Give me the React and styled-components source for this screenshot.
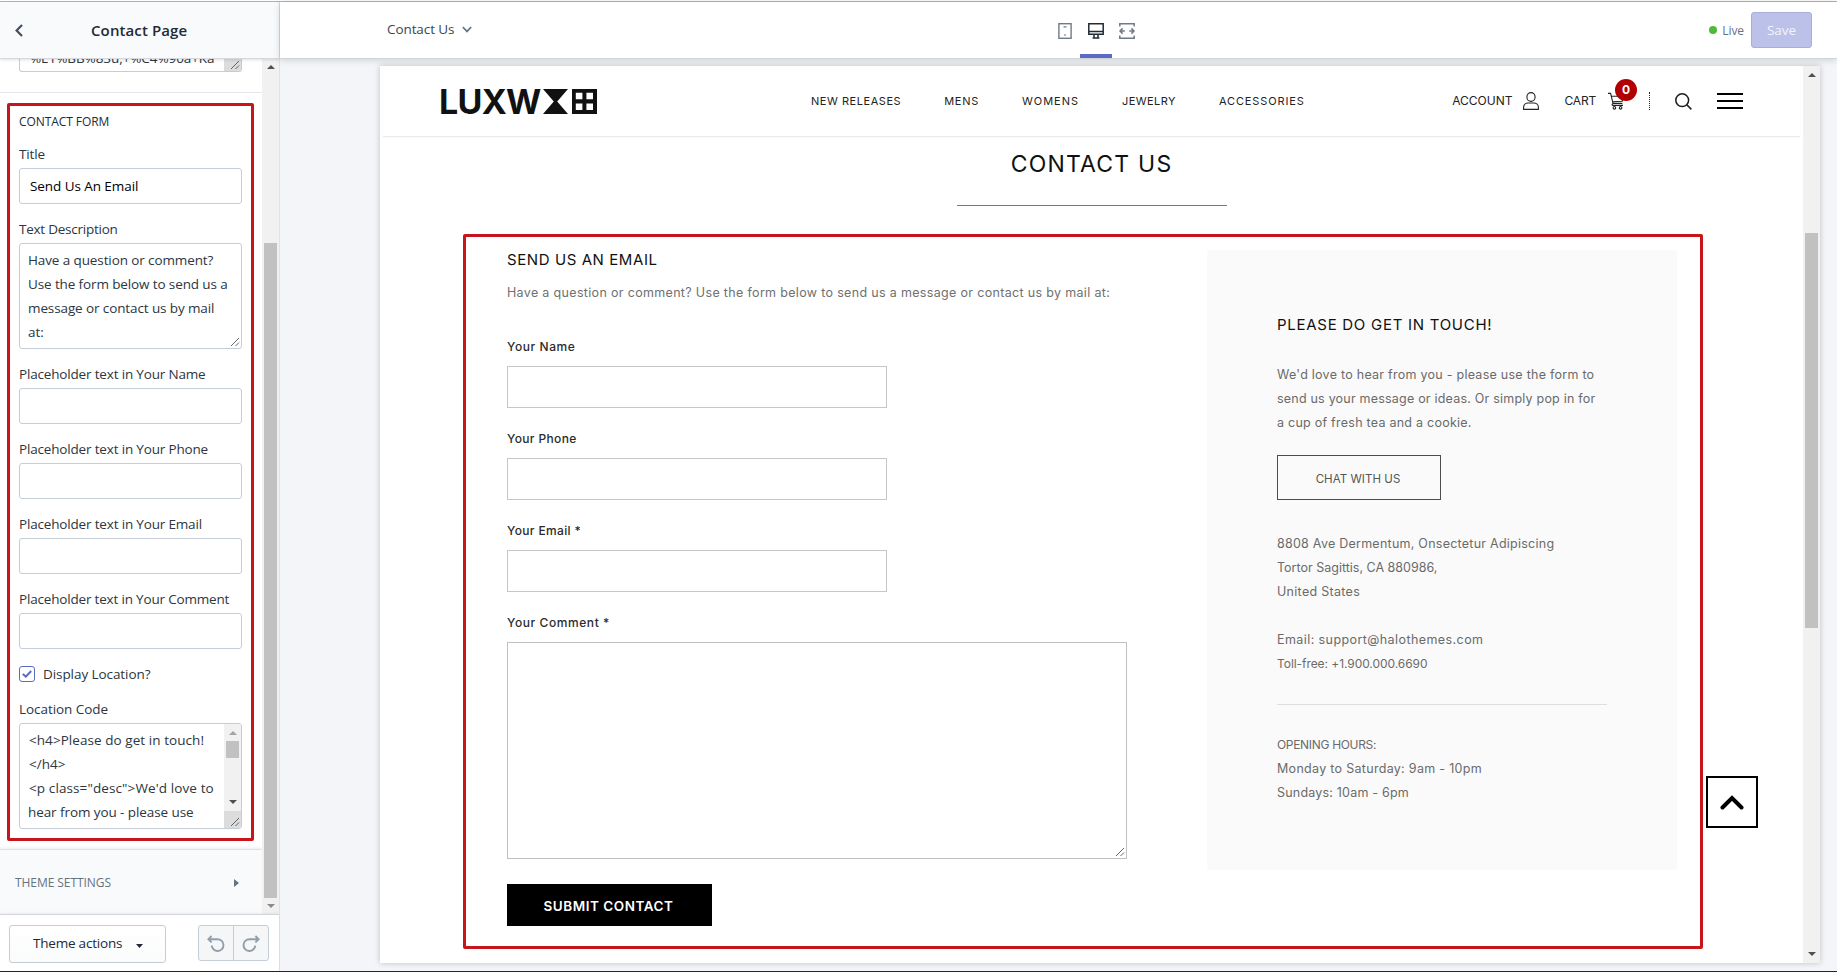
import React from 'react';
import styled, { createGlobalStyle } from 'styled-components';

const UI = '"Open Sans", "Noto Sans", sans-serif';
const STORE = 'Inter, "Open Sans", sans-serif';

const Global = createGlobalStyle`
  * { box-sizing: border-box; }
  body { margin: 0; overflow: hidden; background: #fff; }
  svg { display: block; flex: none; }
`;

/* ---------- shared ---------- */
const Page = styled.div`
  width: 1837px; height: 972px; display: flex; flex-direction: column;
  padding-top: 1px; border-bottom: 1px solid #22252a; overflow: hidden;
`;
const Columns = styled.div`flex: 1; display: flex; min-height: 0; border-top: 1px solid #b3b3b3;`;
const Line = styled.div`
  white-space: pre; line-height: 24px; height: 24px;
  letter-spacing: ${(p) => p.$ls || 0}px;
`;
const Track = styled.div`
  flex: none; width: ${(p) => p.$w}px; background: #f1f1f1;
  display: flex; flex-direction: column; align-items: center;
`;
const TrackGap = styled.div`height: ${(p) => p.$h}px; flex: none; display: flex; align-items: ${(p) => p.$align || 'flex-start'};`;
const Thumb = styled.div`width: 13px; height: ${(p) => p.$h}px; background: #c1c1c1; flex: none;`;
const Spring = styled.div`flex: 1;`;
const Callout = styled.section`border: 3px solid #c8151b; border-radius: 2px;`;

const Arrow = ({ down, color = '#505050' }) => (
  <svg width="8" height="4" viewBox="0 0 8 4"><path d={down ? 'M0 0h8L4 4z' : 'M0 4h8L4 0z'} fill={color} /></svg>
);
const Grip = () => (
  <svg width="10" height="10" viewBox="0 0 10 10" stroke="#555" strokeWidth="0.9" fill="none"><path d="M1 9L9 1M5.5 9L9 5.5" /></svg>
);

/* ---------- sidebar ---------- */
const Sidebar = styled.aside`
  width: 280px; flex: none; border-right: 1px solid #dfe3e8; display: flex; flex-direction: column;
  font: 13.5px ${UI}; color: #2c3640; background: #fff;
`;
const SideHeader = styled.header`
  height: 57px; flex: none; background: #f9fafc; border-bottom: 1px solid #d5d9de;
  box-shadow: 0 1px 3px rgba(0,0,0,.12); display: flex; align-items: center; padding-left: 15px;
  position: relative; z-index: 1;
`;
const SideTitle = styled(Line)`font-size: 15px; font-weight: 600; color: #212b36; margin: -1px 0 0 68px;`;
const SideBody = styled.div`flex: 1; min-height: 0; display: flex;`;
const Scroll = styled.div`width: 262px; overflow: hidden; display: flex; flex-direction: column;`;
const Previous = styled.div`
  margin: 0 0 0 19px; width: 223px; height: 13px; flex: none; overflow: hidden; display: flex;
  justify-content: space-between; border: 1px solid #c4cdd5; border-top: 0; border-radius: 0 0 3px 3px;
  padding-left: 10px;
`;
const ClippedLine = styled(Line)`margin-top: -13px;`;
const GripBox = styled.div`width: 17px; height: ${(p) => p.$h}px; background: #dcdcdc; display: flex; align-items: flex-end; justify-content: flex-end; padding: 1px;`;
const Divider = styled.div`height: 1px; flex: none; margin-top: 20px; background: #e3e6ea;`;
const FormCallout = styled(Callout)`
  margin: 10px 8px 8px 7px; height: 738px; flex: none; padding: 0 9px; display: flex; flex-direction: column;
`;
const GroupTitle = styled(Line)`font-size: 12px; font-weight: 500; height: 31px; line-height: 31px; margin-bottom: 5px; color: #212b36;`;
const Field = styled.div`margin-bottom: 13px;`;
const Control = styled.div`
  margin-top: 2px; height: ${(p) => p.$h || 36}px; border: 1px solid #c4cdd5; border-radius: 3px; background: #fff;
  display: flex; justify-content: space-between; align-items: ${(p) => p.$align || 'center'};
  padding-left: ${(p) => p.$pl || 10}px; overflow: hidden; color: ${(p) => p.$color || 'inherit'};
`;
const Lines = styled.div`padding-top: 4px;`;
const CodeLine = styled(Line)`padding-left: 1px;`;
const Corner = styled.div`align-self: flex-end; padding: 1px;`;
const CheckRow = styled.div`display: flex; align-items: center; height: 24px; gap: 8px; margin-bottom: 11px;`;
const Check = styled.div`
  width: 16px; height: 16px; border: 1px solid #5c6ac4; border-radius: 3px; display: flex; align-items: center; justify-content: center;
`;
const ThemeSettings = styled.div`
  flex: 1; background: #f9fafb; border-top: 1px solid #dfe3e8; box-shadow: 0 -1px 3px rgba(0,0,0,.08);
  display: flex; align-items: center; justify-content: space-between; padding: 1px 23px 0 15px;
  font-size: 12px; font-weight: 500; color: #637381;
`;
const SideFooter = styled.footer`
  height: 57px; flex: none; border-top: 1px solid #d2d6da; box-shadow: 0 -1px 3px rgba(0,0,0,.06);
  display: flex; justify-content: space-between; padding: 10px 10px 0 9px;
`;
const ThemeActions = styled.div`
  width: 157px; height: 38px; border: 1px solid #c4cdd5; border-radius: 3px; background: linear-gradient(#fff, #fafbfc);
  display: flex; align-items: center; padding: 0 22px 2px 23px; justify-content: space-between; color: #212b36;
`;
const History = styled.div`width: 71px; height: 36px; border: 1px solid #c4cdd5; border-radius: 3px; background: #f4f6f8; display: flex;`;
const HistoryButton = styled.div`
  flex: 1; display: flex; align-items: center; justify-content: center; padding-top: 2px;
  & + & { border-left: 1px solid #c4cdd5; }
`;

/* ---------- editor ---------- */
const Editor = styled.main`flex: 1; min-width: 0; display: flex; flex-direction: column; background: #f4f5f8;`;
const TopBar = styled.header`
  height: 57px; flex: none; background: #fff; border-bottom: 1px solid #d0d3d7; box-shadow: 0 1px 7px rgba(0,0,0,.16);
  display: flex; align-items: center; padding: 0 25px 0 107px; font: 13.5px ${UI}; color: #3c4650; position: relative; z-index: 1;
`;
const PagePicker = styled.div`display: flex; align-items: center; gap: 8px; width: 671px; padding-bottom: 2px;`;
const Devices = styled.div`display: flex; height: 56px; align-self: flex-start; gap: 7.5px;`;
const Device = styled.div`
  width: ${(p) => p.$w}px; display: flex; justify-content: center; padding-top: 21px;
  border-bottom: 4px solid ${(p) => (p.$active ? '#5c6ac4' : 'transparent')};
`;
const Status = styled.div`margin-left: auto; display: flex; align-items: center; gap: 5px; font-size: 12px; color: #637381; padding-top: 1px;`;
const Dot = styled.i`width: 8px; height: 8px; border-radius: 50%; background: #50b83c; margin-top: -2px;`;
const Save = styled.div`
  margin-left: 7px; width: 61px; height: 36px; border: 1px solid #a7aedc; border-radius: 3px; background: #bbc1e8;
  color: #f3f4fb; display: flex; align-items: center; justify-content: center;
`;
const Canvas = styled.div`flex: 1; min-height: 0; padding: 7px 17px 8px 100px; display: flex;`;
const Frame = styled.div`
  flex: 1; display: flex; background: #fff; position: relative; box-shadow: 0 0 6px rgba(0,0,0,.22);
`;
const Store = styled.div`flex: 1; min-width: 0; font: 12px ${STORE}; color: #666;`;

const StoreHeader = styled.header`
  height: 71px; margin: 0 3px; padding: 0 57px 0 57px; border-bottom: 1px solid #ebebeb; box-shadow: 0 1px 2px rgba(0,0,0,.04);
  display: flex; align-items: center; color: #232323;
`;
const Logo = styled.div`display: flex; align-items: center; height: 25px; width: 157px; color: #111;`;
const LogoText = styled.span`
  font: 700 34px/25px ${STORE}; letter-spacing: -0.74px; width: 103.5px; margin-left: -1px; margin-right: 1px; white-space: nowrap;
`;
const Nav = styled.nav`display: flex; gap: 43px; margin-left: 214px; font-size: 11px; padding-bottom: 1px;`;
const Tools = styled.div`margin-left: auto; display: flex; align-items: center; font-size: 12px;`;
const Tool = styled.div`display: flex; align-items: center; gap: ${(p) => p.$gap || 0}px; margin-left: ${(p) => p.$ml || 0}px; position: relative;`;
const Badge = styled.b`
  position: absolute; right: -13px; top: -10px; width: 22px; height: 22px; border-radius: 50%; background: #b10000; color: #fff;
  font-size: 12px; line-height: 22px; text-align: center;
`;
const Dots = styled.i`width: 0; height: 18px; border-left: 1px dotted #232323; margin-left: 25px;`;
const Burger = styled.div`
  width: 26px; height: 16px; margin-left: 25px; display: flex; flex-direction: column; justify-content: space-between;
  &::before, &::after { content: ''; } & > i, &::before, &::after { height: 2px; background: #000; }
`;
const TitleBlock = styled.div`height: 97px; display: flex; flex-direction: column; align-items: center; padding-top: 10px;`;
const PageTitle = styled.h1`margin: 0; font-size: 23px; font-weight: 400; line-height: 34px; letter-spacing: 1.2px; color: #111;`;
const Rule = styled.div`width: 270px; height: 1px; background: #777; margin-top: 24px;`;
const ContactCallout = styled(Callout)`width: 1240px; height: 715px; margin-left: 83px; padding: 0 23px 0 41px; display: flex; justify-content: space-between;`;
const Form = styled.div`width: 620px; padding-top: 11px;`;
const Heading = styled(Line)`font-size: 15px; color: #111;`;
const Intro = styled(Line)`margin: 9px 0 30px; font-size: 12.5px; color: #707070;`;
const Label = styled(Line)`color: #2b2b2b; margin-bottom: 7px; font-weight: 500;`;
const Input = styled.div`width: 380px; height: 42px; border: 1px solid #c6c6c6; margin-bottom: 19px;`;
const TextArea = styled.div`
  width: 620px; height: 217px; border: 1px solid #c0c0c0; display: flex; align-items: flex-end; justify-content: flex-end; padding: 1px;
`;
const Submit = styled.div`
  width: 205px; height: 42px; margin-top: 25px; background: #000; color: #fff; font-size: 13.5px; font-weight: 600;
  display: flex; align-items: center; justify-content: center; padding: 1px 2px 0 0;
`;
const Panel = styled.div`width: 470px; height: 620px; margin-top: 13px; padding: 62px 70px 0; background: #fafafa;`;
const PanelHeading = styled(Heading)`line-height: 26px;`;
const Block = styled.div`margin-top: ${(p) => p.$mt}px; color: #6a6a6a; font-size: 12.5px;`;
const SmallLine = styled(Line)`font-size: 12px;`;
const Chat = styled.div`
  width: 164px; height: 45px; margin-top: 20px; border: 1px solid #4c4c4c; color: #555; font-size: 11.5px;
  display: flex; align-items: center; justify-content: center; padding: 2px 2px 0 0;
`;
const Separator = styled.div`height: 1px; margin-top: 28px; background: #dedede;`;
const ToTop = styled.div`
  position: absolute; left: 1326px; top: 710px; width: 52px; height: 52px; border: 2px solid #000; background: #fff;
  display: flex; align-items: center; justify-content: center;
`;

const PLACEHOLDERS = [['Name', -0.17], ['Phone', -0.17], ['Email', -0.17], ['Comment', -0.18]];
const NAV = [['NEW RELEASES', 0.54], ['MENS', 0.72], ['WOMENS', 0.98], ['JEWELRY', 0.44], ['ACCESSORIES', 0.89]];
const INPUTS = [['Your Name', 0.58], ['Your Phone', 0.36], ['Your Email *', 0.36]];

function SidebarPanel() {
  return (
    <Sidebar>
      <SideHeader>
        <svg width="8" height="13" viewBox="0 0 8 13" fill="none" stroke="#454f5b" strokeWidth="2.2"><path d="M7 1L1.6 6.5L7 12" /></svg>
        <SideTitle $ls={0.11}>Contact Page</SideTitle>
      </SideHeader>
      <SideBody>
        <Scroll>
          <Previous>
            <ClippedLine $ls={-0.07}>%E1%BB%83u,+%C4%90a+Ka</ClippedLine>
            <GripBox $h={12}><Grip /></GripBox>
          </Previous>
          <Divider />
          <FormCallout>
            <GroupTitle $ls={-0.08}>CONTACT FORM</GroupTitle>
            <Field>
              <Line $ls={-0.14}>Title</Line>
              <Control $color="#000"><Line $ls={-0.07}>Send Us An Email</Line></Control>
            </Field>
            <Field>
              <Line $ls={-0.24}>Text Description</Line>
              <Control $h={106} $pl={8} $align="flex-start">
                <Lines>
                  <Line $ls={-0.11}>Have a question or comment?</Line>
                  <Line $ls={-0.12}>Use the form below to send us a</Line>
                  <Line $ls={-0.11}>message or contact us by mail</Line>
                  <Line>at:</Line>
                </Lines>
                <Corner><Grip /></Corner>
              </Control>
            </Field>
            {PLACEHOLDERS.map(([name, ls]) => (
              <Field key={name}>
                <Line $ls={ls}>Placeholder text in Your {name}</Line>
                <Control />
              </Field>
            ))}
            <CheckRow>
              <Check>
                <svg width="10" height="8" viewBox="0 0 10 8" fill="none" stroke="#5c6ac4" strokeWidth="2"><path d="M.8 4L3.8 6.6L9.2 1" /></svg>
              </Check>
              <Line $ls={-0.07}>Display Location?</Line>
            </CheckRow>
            <Field>
              <Line $ls={-0.06}>Location Code</Line>
              <Control $h={106} $pl={8} $align="flex-start">
                <Lines>
                  <CodeLine $ls={0.06}>{'<h4>Please do get in touch!'}</CodeLine>
                  <CodeLine $ls={0.04}>{'</h4>'}</CodeLine>
                  <CodeLine $ls={0.11}>{'<p class="desc">We\'d love to'}</CodeLine>
                  <Line $ls={-0.08}>hear from you - please use</Line>
                </Lines>
                <Track $w={17}>
                  <TrackGap $h={17} $align="center"><Arrow color="#a3a3a3" /></TrackGap>
                  <Thumb $h={17} />
                  <TrackGap $h={53} $align="flex-end"><TrackGap $h={11}><Arrow down /></TrackGap></TrackGap>
                  <GripBox $h={17}><Grip /></GripBox>
                </Track>
              </Control>
            </Field>
          </FormCallout>
          <ThemeSettings>
            <Line $ls={-0.06}>THEME SETTINGS</Line>
            <svg width="5" height="8" viewBox="0 0 5 8" fill="#637381"><path d="M0 0L5 4L0 8z" /></svg>
          </ThemeSettings>
        </Scroll>
        <Track $w={17}>
          <TrackGap $h={184}><TrackGap $h={10} $align="flex-end"><Arrow /></TrackGap></TrackGap>
          <Thumb $h={655} />
          <TrackGap $h={16} $align="center"><Arrow down color="#8a8a8a" /></TrackGap>
        </Track>
      </SideBody>
      <SideFooter>
        <ThemeActions>
          <Line $ls={-0.21}>Theme actions</Line>
          <svg width="7" height="10" viewBox="0 0 7 10" fill="#212b36"><path d="M0 6h7L3.5 10z" /></svg>
        </ThemeActions>
        <History>
          <HistoryButton>
            <svg width="18" height="18" viewBox="0 0 18 18" fill="none" stroke="#919eab" strokeWidth="1.9">
              <path d="M1.8 4.2H10.6a5.9 5.9 0 1 1-5.9 6.4M4.6 1L1.4 4.2L4.6 7.4" />
            </svg>
          </HistoryButton>
          <HistoryButton>
            <svg width="18" height="18" viewBox="0 0 18 18" fill="none" stroke="#919eab" strokeWidth="1.9">
              <path d="M16.2 4.2H7.4a5.9 5.9 0 1 0 5.9 6.4M13.4 1L16.6 4.2L13.4 7.4" />
            </svg>
          </HistoryButton>
        </History>
      </SideFooter>
    </Sidebar>
  );
}

function EditorBar() {
  return (
    <TopBar>
      <PagePicker>
        <Line $ls={-0.09}>Contact Us</Line>
        <svg width="10" height="7" viewBox="0 0 10 7" fill="none" stroke="#637381" strokeWidth="1.7"><path d="M.8 1L5 5.4L9.2 1" /></svg>
      </PagePicker>
      <Devices>
        <Device $w={14}>
          <svg width="14" height="16" viewBox="0 0 14 16" fill="none" stroke="#6f7b86" strokeWidth="1.4">
            <rect x=".9" y=".7" width="12.2" height="14.6" /><path d="M5.5 3.9h3M6.3 12h1.4" />
          </svg>
        </Device>
        <Device $w={32} $active>
          <svg width="16" height="16" viewBox="0 0 16 16" fill="none" stroke="#212b36" strokeWidth="1.5">
            <path d="M.8.8h14.4v10.4H.8zM.8 8.6h14.4M6 11.2v3M10 11.2v3M4.6 14.9h6.8" />
          </svg>
        </Device>
        <Device $w={16}>
          <svg width="16" height="16" viewBox="0 0 16 16" fill="none" stroke="#6f7b86" strokeWidth="1.5">
            <path d="M.8 3.6V.8h14.4v2.8M.8 12.4v2.8h14.4v-2.8M.8 8h5M10.2 8h5M3.6 5.4L1 8l2.6 2.6M12.4 5.4L15 8l-2.6 2.6" />
          </svg>
        </Device>
      </Devices>
      <Status><Dot /><Line $ls={-0.1}>Live</Line></Status>
      <Save><Line>Save</Line></Save>
    </TopBar>
  );
}

function StoreTop() {
  return (
    <StoreHeader>
      <Logo>
        <LogoText>LUXW</LogoText>
        <svg width="54" height="25" viewBox="0 0 54 25" fill="#111">
          <path d="M0 0h25L14.2 12.5L25 25H0L10.8 12.5z" />
          <path fillRule="evenodd" d="M29 0h25v25H29zM32.8 3.8v6.4h6.6V3.8zM43.4 3.8v6.4H50V3.8zM32.8 14.6V21h6.6v-6.4zM43.4 14.6V21H50v-6.4z" />
        </svg>
      </Logo>
      <Nav>{NAV.map(([t, ls]) => <Line key={t} $ls={ls}>{t}</Line>)}</Nav>
      <Tools>
        <Tool $gap={10}>
          <Line>ACCOUNT</Line>
          <svg width="16" height="18" viewBox="0 0 16 18" fill="none" stroke="#232323" strokeWidth="1.1">
            <ellipse cx="8" cy="5" rx="4.1" ry="4.4" /><path d="M.6 17.4v-2.2c0-2.6 2.2-4.2 4.6-4.2h5.6c2.4 0 4.6 1.6 4.6 4.2v2.2z" />
          </svg>
        </Tool>
        <Tool $gap={12} $ml={26}>
          <Line $ls={-0.2}>CART</Line>
          <svg width="16" height="18" viewBox="0 0 16 18" fill="none" stroke="#232323" strokeWidth="1.1">
            <path d="M0 1.4h2.6L5 11.4h9.4M3.3 4.2H15.4L14.2 9.2L4.6 9.8M5 11.4c-1.2.6-1.2 2 0 2h10" />
            <circle cx="6.4" cy="15.8" r="1.3" /><circle cx="12.6" cy="15.8" r="1.3" />
          </svg>
          <Badge>0</Badge>
        </Tool>
        <Dots />
        <Tool $ml={25}>
          <svg width="17" height="17" viewBox="0 0 17 17" fill="none" stroke="#1a1a1a" strokeWidth="1.5">
            <circle cx="7.2" cy="7.2" r="6.4" /><path d="M11.8 11.8L16.4 16.4" />
          </svg>
        </Tool>
        <Burger><i /></Burger>
      </Tools>
    </StoreHeader>
  );
}

function ContactSection() {
  return (
    <ContactCallout>
      <Form>
        <Heading $ls={0.58}>SEND US AN EMAIL</Heading>
        <Intro $ls={0.33}>Have a question or comment? Use the form below to send us a message or contact us by mail at:</Intro>
        {INPUTS.map(([t, ls]) => (
          <React.Fragment key={t}><Label $ls={ls}>{t}</Label><Input /></React.Fragment>
        ))}
        <Label $ls={0.58}>Your Comment *</Label>
        <TextArea><Grip /></TextArea>
        <Submit><Line $ls={0.53}>SUBMIT CONTACT</Line></Submit>
      </Form>
      <Panel>
        <PanelHeading $ls={0.72}>PLEASE DO GET IN TOUCH!</PanelHeading>
        <Block $mt={27}>
          <Line $ls={0.26}>We'd love to hear from you - please use the form to</Line>
          <Line $ls={0.21}>send us your message or ideas. Or simply pop in for</Line>
          <Line $ls={0.25}>a cup of fresh tea and a cookie.</Line>
        </Block>
        <Chat><Line $ls={0.05}>CHAT WITH US</Line></Chat>
        <Block $mt={32}>
          <Line $ls={0.25}>8808 Ave Dermentum, Onsectetur Adipiscing</Line>
          <Line $ls={0}>Tortor Sagittis, CA 880986,</Line>
          <Line $ls={0.3}>United States</Line>
        </Block>
        <Block $mt={24}>
          <Line $ls={0.42}>Email: support@halothemes.com</Line>
          <SmallLine $ls={-0.06}>Toll-free: +1.900.000.6690</SmallLine>
        </Block>
        <Separator />
        <Block $mt={28}>
          <SmallLine $ls={-0.32}>OPENING HOURS:</SmallLine>
          <Line $ls={0.3}>Monday to Saturday: 9am - 10pm</Line>
          <Line $ls={0.2}>Sundays: 10am - 6pm</Line>
        </Block>
      </Panel>
    </ContactCallout>
  );
}

export default function App() {
  return (
    <Page>
      <Global />
      <Columns>
        <SidebarPanel />
        <Editor>
          <EditorBar />
          <Canvas>
            <Frame>
              <Store>
                <StoreTop />
                <TitleBlock><PageTitle>CONTACT US</PageTitle><Rule /></TitleBlock>
                <ContactSection />
              </Store>
              <Track $w={17}>
                <TrackGap $h={167}><TrackGap $h={11} $align="flex-end"><Arrow /></TrackGap></TrackGap>
                <Thumb $h={395} />
                <Spring />
                <TrackGap $h={11}><Arrow down /></TrackGap>
              </Track>
              <ToTop>
                <svg width="24" height="15" viewBox="0 0 24 15" fill="none" stroke="#000" strokeWidth="4" strokeLinecap="round"><path d="M2.5 12.5L12 3L21.5 12.5" /></svg>
              </ToTop>
            </Frame>
          </Canvas>
        </Editor>
      </Columns>
    </Page>
  );
}
